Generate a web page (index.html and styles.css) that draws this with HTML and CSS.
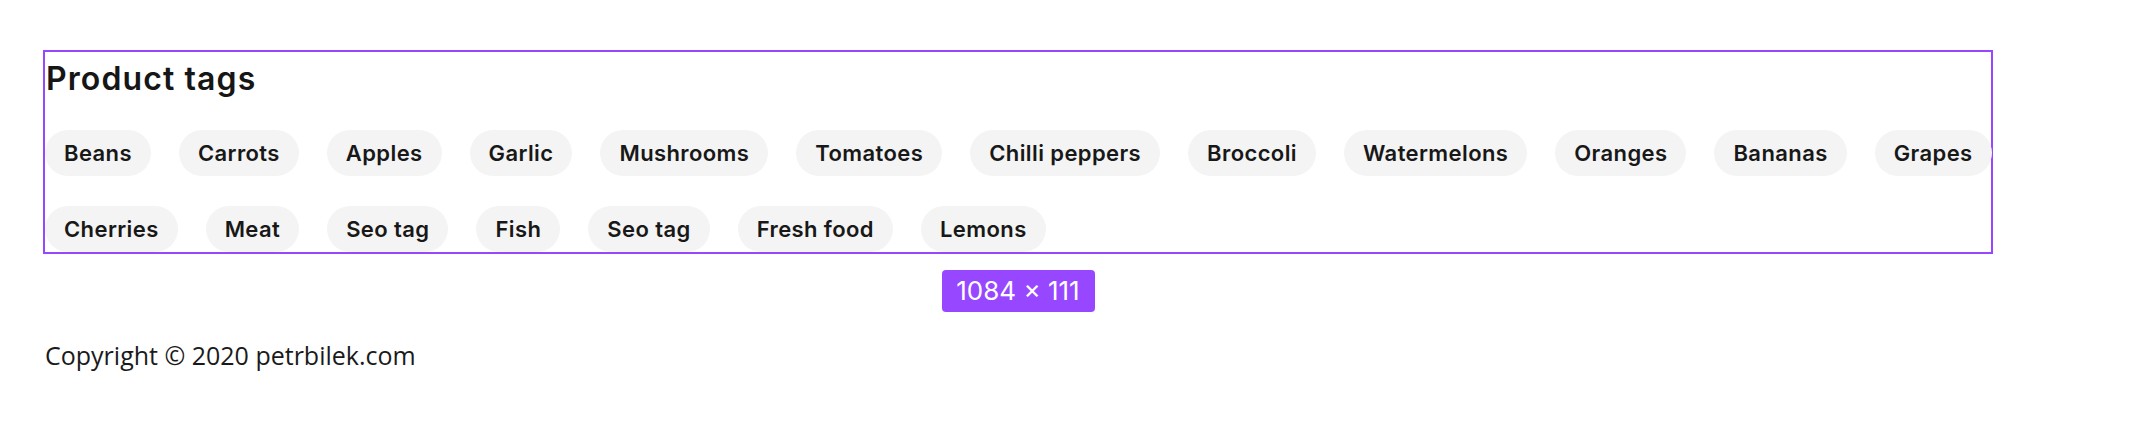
FILE: index.html
```html
<!DOCTYPE html>
<html lang="en">
<head>
<meta charset="utf-8">
<title>Product tags</title>
<link rel="stylesheet" href="styles.css">
</head>
<body>
<main class="page">
  <div class="frame">
    <section class="tags-box">
      <h2 class="tags-title">Product tags</h2>
      <div class="tag-list">
        <div class="tag-row">
          <a class="tag">Beans</a>
          <a class="tag">Carrots</a>
          <a class="tag">Apples</a>
          <a class="tag">Garlic</a>
          <a class="tag">Mushrooms</a>
          <a class="tag">Tomatoes</a>
          <a class="tag">Chilli peppers</a>
          <a class="tag">Broccoli</a>
          <a class="tag">Watermelons</a>
          <a class="tag">Oranges</a>
          <a class="tag">Bananas</a>
          <a class="tag">Grapes</a>
        </div>
        <div class="tag-row">
          <a class="tag">Cherries</a>
          <a class="tag">Meat</a>
          <a class="tag">Seo tag</a>
          <a class="tag">Fish</a>
          <a class="tag">Seo tag</a>
          <a class="tag">Fresh food</a>
          <a class="tag">Lemons</a>
        </div>
      </div>
    </section>
    <div class="size-label">1084 × 111</div>
  </div>
  <footer class="footer">Copyright © 2020 petrbilek.com</footer>
</main>
</body>
</html>
```
FILE: styles.css
```css
* { box-sizing: border-box; }
html, body { margin: 0; padding: 0; background: #ffffff; }

.page {
  padding: 50px 0 0 43px;
}

.frame {
  width: 1950px;
  display: flex;
  flex-direction: column;
  align-items: center;
}

.tags-box {
  width: 1950px;
  border: 2px solid #9747ff;
  padding: 7px 0 0 0;
  align-self: stretch;
}

.tags-title {
  margin: 0 0 31px 0;
  padding-left: 1px;
  font-family: "Inter", "Liberation Sans", sans-serif;
  font-weight: 600;
  font-size: 32px;
  line-height: 40px;
  letter-spacing: 1.1px;
  color: #161616;
}

.tag-list {
  display: flex;
  flex-direction: column;
  gap: 30px;
}

.tag-row {
  display: flex;
  gap: 28px;
}

.tag {
  display: flex;
  align-items: center;
  height: 46px;
  padding: 0 19px;
  border-radius: 23px;
  background: #f4f4f4;
  font-family: "Inter", "Liberation Sans", sans-serif;
  font-weight: 600;
  font-size: 22px;
  letter-spacing: 0.4px;
  color: #181818;
  white-space: nowrap;
}

.size-label {
  margin-top: 16px;
  width: 153px;
  height: 42px;
  border-radius: 4px;
  background: #9747ff;
  color: #ffffff;
  font-family: "Inter", "Liberation Sans", sans-serif;
  font-size: 26px;
  line-height: 42px;
  text-align: center;
}

.footer {
  margin: 26px 0 0 2px;
  font-family: "Open Sans", "Liberation Sans", sans-serif;
  font-size: 25px;
  color: #1a1a1a;
}
```
